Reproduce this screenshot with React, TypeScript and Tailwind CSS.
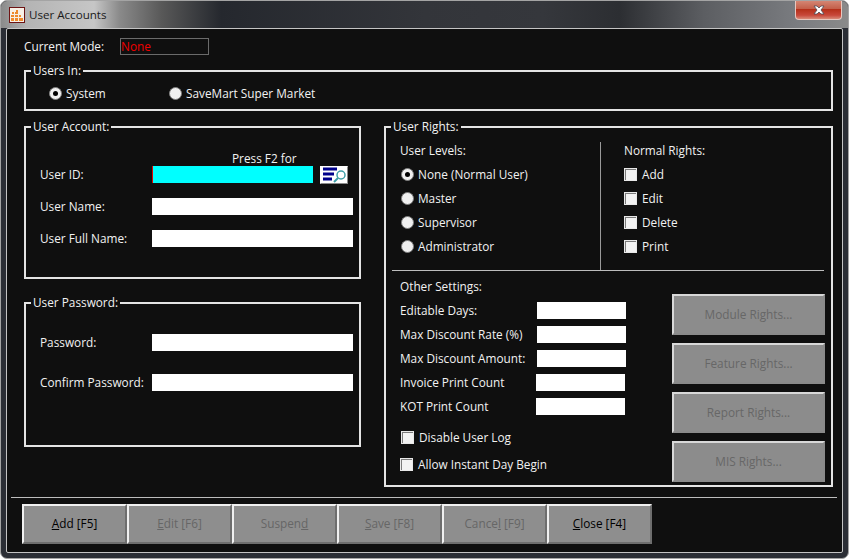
import React from "react";

const GroupBox = ({
  title,
  className,
  children,
}: {
  title: string;
  className: string;
  children?: React.ReactNode;
}) => (
  <div className={`relative border-2 border-[#e4e4e4] ${className}`}>
    <span className="absolute left-[5px] top-[-10px] h-4 bg-[#0f0f0f] px-[2px] leading-4">
      {title}
    </span>
    {children}
  </div>
);

const Radio = ({ checked, label }: { checked?: boolean; label: string }) => (
  <div className="flex items-center">
    <span className="flex h-[13px] w-[13px] items-center justify-center rounded-full border border-[#808080] bg-[#f0f0f0]">
      {checked && <span className="h-[5px] w-[5px] rounded-full bg-black" />}
    </span>
    <span className="ml-[4px] mt-px">{label}</span>
  </div>
);

const Check = ({ label, className = "" }: { label: string; className?: string }) => (
  <div className={`flex items-center ${className}`}>
    <span className="h-[13px] w-[13px] border border-[#e8e8e8] bg-[#f2f2f2] shadow-[inset_1px_1px_0_#7a7a7a]" />
    <span className="ml-[5px] mt-px">{label}</span>
  </div>
);

const TextBox = ({ className = "w-[201px]" }: { className?: string }) => (
  <div className={`h-[17px] bg-white ${className}`} />
);

const FormRow = ({ label, children }: { label: string; children: React.ReactNode }) => (
  <div className="flex h-[17px] items-center">
    <span className="ml-[14px] w-[112px]">{label}</span>
    {children}
  </div>
);

const RightsButton = ({ label }: { label: string }) => (
  <div className="flex h-[41px] w-[153px] items-center justify-center border-2 border-[#8a8a8a] border-t-[#d8d8d8] border-l-[#d8d8d8] bg-[#8c8c8c] text-[#676767]">
    {label}
  </div>
);

const ActionButton = ({
  pre = "",
  mark,
  post = "",
  enabled,
}: {
  pre?: string;
  mark: string;
  post?: string;
  enabled?: boolean;
}) => (
  <div
    className={`flex h-10 w-[105px] items-center justify-center border-2 border-[#6e6e6e] border-t-[#f0f0f0] border-l-[#f0f0f0] bg-[#8e8e8e] ${
      enabled ? "text-black" : "text-[#666666]"
    }`}
  >
    <span className="whitespace-pre">
      {pre}
      <span className="underline">{mark}</span>
      {post}
    </span>
  </div>
);

const AppIcon = () => (
  <svg width="16" height="16" viewBox="0 0 16 16" className="shrink-0">
    <rect x="0.5" y="0.5" width="15" height="15" fill="#f7f0e6" stroke="#6e1414" />
    <g fill="#ee8a2c">
      <rect x="7" y="3" width="2" height="2" />
      <rect x="3" y="5" width="2" height="2" />
      <rect x="6" y="5" width="3" height="2" />
      <rect x="2" y="8" width="3" height="2" />
      <rect x="6" y="8" width="3" height="2" />
      <rect x="10" y="8" width="2" height="2" />
      <rect x="2" y="11" width="3" height="3" />
      <rect x="6" y="11" width="3" height="3" />
      <rect x="10" y="11" width="4" height="3" />
    </g>
  </svg>
);

const LookupIcon = () => (
  <div className="ml-[7px] h-[18px] w-[28px] border border-[#8a8a8a] border-t-white border-l-white bg-white">
    <svg width="26" height="16" viewBox="0 0 26 16">
      <g fill="#00008b">
        <rect x="2" y="0.5" width="14" height="3" />
        <rect x="2" y="5.5" width="11" height="3" />
        <rect x="2" y="10.5" width="9" height="3" />
      </g>
      <circle cx="20" cy="8" r="4" fill="#fff" stroke="#3f9fa8" strokeWidth="1.5" />
      <path d="M17 11 L13 15" stroke="#3f9fa8" strokeWidth="2" />
    </svg>
  </div>
);

const App = () => {
  return (
    <div className="flex h-[559px] w-[849px] flex-col overflow-hidden rounded-[7px] border border-[#a4a4a4] bg-[#2b2e35] px-[5px] pb-[5px] font-['Open_Sans',sans-serif] text-[11.8px] text-[#f2f2f2]">
      {/* title bar */}
      <div className="relative mx-[-5px] flex h-[27px] shrink-0 items-center bg-[linear-gradient(90deg,#8a8a8a_0%,#b4b4b4_3%,#c6c6c6_11%,#8a8a8a_14%,#585858_19%,#25282e_26%,#33353a_50%,#35373c_64%,#2c2e32_73%,#5c5e62_83%,#7a7c80_94%,#8a8a8a_100%)] pl-[8px] pt-px">
        <AppIcon />
        <span className="ml-[4px] text-[11.6px] text-[#1a1a1a]">User Accounts</span>
        <div className="absolute right-[6px] top-[-1px] flex h-5 w-[47px] items-center justify-center rounded-b-[4px] border border-[#e8c8c0] border-t-0 bg-[linear-gradient(180deg,#d68a78_0%,#c4604a_45%,#b5301a_50%,#c8483a_80%,#d88a78_100%)]">
          <svg width="14" height="10" viewBox="0 0 14 10">
            <path
              d="M2 1 L5 1 L7 3 L9 1 L12 1 L9 5 L12 9 L9 9 L7 7 L5 9 L2 9 L5 5 Z"
              fill="#fff"
              stroke="#4a4a55"
              strokeWidth="0.8"
            />
          </svg>
        </div>
      </div>

      {/* client area */}
      <div className="flex-1 rounded-[2px] border border-[#c4c4c4] bg-[#0f0f0f] pl-[17px] pt-[9px]">
        <div className="flex h-[17px] items-center">
          <span className="w-[96px]">Current Mode:</span>
          <div className="flex h-[17px] w-[89px] items-center border border-[#6a6a6a] text-[#f00000]">
            None
          </div>
        </div>

        <GroupBox title="Users In:" className="mt-[15px] h-[41px] w-[809px]">
          <div className="flex h-[37px] items-center pl-[23px] pt-[6px]">
            <div className="w-[120px]">
              <Radio checked label="System" />
            </div>
            <Radio label="SaveMart Super Market" />
          </div>
        </GroupBox>

        <div className="mt-[15px] flex h-[361px]">
          <div className="flex w-[337px] flex-col gap-[23px]">
            <GroupBox title="User Account:" className="h-[153px]">
              <div className="ml-[206px] mt-[22px] h-4 leading-4">Press F2 for</div>
              <div className="flex flex-col gap-[15px]">
                <FormRow label="User ID:">
                  <div className="h-[17px] w-[161px] border-l border-l-[#e00000] bg-[#00ffff]" />
                  <LookupIcon />
                </FormRow>
                <FormRow label="User Name:">
                  <TextBox />
                </FormRow>
                <FormRow label="User Full Name:">
                  <TextBox />
                </FormRow>
              </div>
            </GroupBox>

            <GroupBox title="User Password:" className="h-[145px]">
              <div className="mt-[30px] flex flex-col gap-[23px]">
                <FormRow label="Password:">
                  <TextBox />
                </FormRow>
                <FormRow label="Confirm Password:">
                  <TextBox />
                </FormRow>
              </div>
            </GroupBox>
          </div>

          <GroupBox title="User Rights:" className="ml-[23px] h-[361px] w-[449px]">
            <div className="ml-[6px] flex h-[143px] w-[432px] border-b border-b-[#bdbdbd]">
              <div className="mt-[14px] w-[209px] border-r border-r-[#9a9a9a] pl-[8px]">
                <div className="h-4 leading-4">User Levels:</div>
                <div className="mt-[4px] flex flex-col">
                  {["None (Normal User)", "Master", "Supervisor", "Administrator"].map((l, i) => (
                    <div key={l} className="flex h-6 items-center pl-[1px]">
                      <Radio checked={i === 0} label={l} />
                    </div>
                  ))}
                </div>
              </div>
              <div className="mt-[14px] pl-[23px]">
                <div className="h-4 leading-4">Normal Rights:</div>
                <div className="mt-[4px] flex flex-col">
                  {["Add", "Edit", "Delete", "Print"].map((l) => (
                    <Check key={l} label={l} className="h-6" />
                  ))}
                </div>
              </div>
            </div>

            <div className="ml-[14px] flex">
              <div className="w-[272px] pt-[7px]">
                <div className="h-4 leading-4">Other Settings:</div>
                <div className="mt-[4px] flex flex-col">
                  {[
                    ["Editable Days:", "w-[137px]"],
                    ["Max Discount Rate (%)", "w-[137px]"],
                    ["Max Discount Amount:", "w-[137px]"],
                    ["Invoice Print Count", "w-[136px]"],
                    ["KOT Print Count", "w-[136px]"],
                  ].map(([l, w]) => (
                    <div key={l} className="flex h-6 items-center">
                      <span className={`${w} mt-px`}>{l}</span>
                      <TextBox className="w-[89px]" />
                    </div>
                  ))}
                </div>
                <Check label="Disable User Log" className="ml-px mt-[11px] h-4" />
                <Check label="Allow Instant Day Begin" className="mt-[11px] h-4" />
              </div>
              <div className="mt-[23px] flex flex-col gap-2">
                <RightsButton label="Module Rights..." />
                <RightsButton label="Feature Rights..." />
                <RightsButton label="Report Rights..." />
                <RightsButton label="MIS Rights..." />
              </div>
            </div>
          </GroupBox>
        </div>

        <div className="ml-[-13px] mt-[10px] h-px w-[826px] bg-[#bdbdbd]" />

        <div className="ml-[-2px] mt-[6px] flex">
          <ActionButton enabled mark="A" post="dd [F5]" />
          <ActionButton mark="E" post="dit [F6]" />
          <ActionButton pre="Suspen" mark="d" />
          <ActionButton mark="S" post="ave [F8]" />
          <ActionButton pre="Cance" mark="l" post=" [F9]" />
          <ActionButton enabled mark="C" post="lose [F4]" />
        </div>
      </div>
    </div>
  );
};

export default App;
